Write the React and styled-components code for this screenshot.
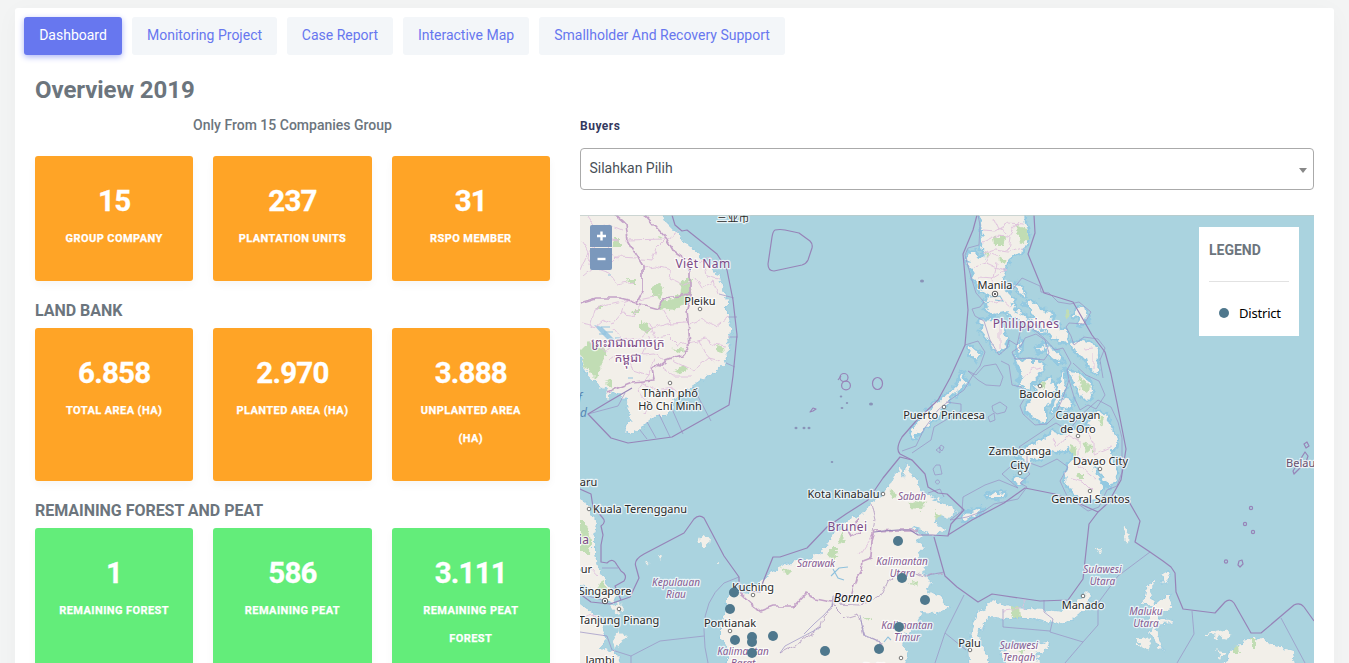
import React from 'react';
import styled, { createGlobalStyle } from 'styled-components';

const GlobalStyle = createGlobalStyle`
  * { box-sizing: border-box; }
  html, body { margin: 0; height: 663px; overflow: hidden; }
  body { background: #f3f4f4; font-family: Roboto, "Liberation Sans", sans-serif; color: #6c757d; }
  h2, h4, h5, p { margin: 0; }
`;

const Page = styled.div`height: 663px; padding: 8px 15px 0; overflow: hidden;`;
const Panel = styled.main`
  height: 780px;
  padding: 9px 20px 0;
  background: #fff;
  border-radius: 3px;
  box-shadow: 0 4px 25px rgba(0, 0, 0, 0.03);
`;
const Tabs = styled.nav`display: flex; gap: 10px; margin-left: -11px;`;
const Tab = styled.button`
  height: 38px;
  width: ${(p) => p.$width}px;
  padding: 0 0 2px;
  border: 0;
  border-radius: 3px;
  font: 400 14px Roboto, sans-serif;
  white-space: nowrap;
  color: ${(p) => (p.$active ? '#fff' : '#6777ef')};
  background: ${(p) => (p.$active ? '#6777ef' : '#f3f6f9')};
  box-shadow: ${(p) => (p.$active ? '0 2px 6px #acb5f6' : 'none')};
`;
const Title = styled.h2`
  margin-top: 19px;
  font-size: 24px;
  line-height: 32px;
  font-weight: 700;
  letter-spacing: -0.08px;
`;
const Columns = styled.div`display: grid; grid-template-columns: 515px 734px; gap: 30px;`;
const Caption = styled.p`
  padding-top: 9px;
  height: 50px;
  text-align: center;
  font-size: 14px;
  line-height: 20px;
  font-weight: 500;
`;
const Section = styled.h4`
  height: 47px;
  padding-top: 19px;
  font-size: 16px;
  line-height: 22px;
  font-weight: 700;
  letter-spacing: -0.03px;
`;
const CardRow = styled.div`
  display: grid;
  grid-template-columns: repeat(3, 1fr);
  gap: 20px;
  height: ${(p) => p.$height}px;
`;
const Card = styled.article`
  padding: 27px 20px 0;
  border-radius: 3px;
  text-align: center;
  color: #fff;
  background: ${(p) => (p.$tone === 'forest' ? '#63ed7a' : '#ffa426')};
  box-shadow: 0 4px 8px rgba(0, 0, 0, 0.04);
`;
const Value = styled.div`
  font-size: 29.5px;
  line-height: 36px;
  font-weight: 700;
  letter-spacing: -0.8px;
  -webkit-text-stroke: 0.3px #fff;
`;
const Label = styled.div`
  margin: 6px auto 0;
  max-width: ${(p) => (p.$wrap ? 108 : 118)}px;
  font-size: 11px;
  line-height: 28px;
  font-weight: 700;
  letter-spacing: 0.42px;
  white-space: ${(p) => (p.$wrap ? 'normal' : 'nowrap')};
  -webkit-text-stroke: 0.25px #fff;
`;
const FieldLabel = styled.label`
  display: block;
  height: 42px;
  padding-top: 12px;
  font-size: 12px;
  line-height: 16px;
  font-weight: 700;
  color: #34395e;
  letter-spacing: 0.5px;
`;
const Select = styled.div`
  display: flex;
  justify-content: space-between;
  height: 42px;
  margin-bottom: 25px;
  padding: 0 6px 0 8.5px;
  border: 1px solid #aaa;
  border-radius: 4px;
  font-size: 14px;
  line-height: 38px;
  color: #495057;
`;
const Caret = styled.span`
  align-self: center;
  margin-top: 3px;
  border: 4px solid transparent;
  border-top: 5px solid #888;
  border-bottom: 0;
`;
const MapFrame = styled.section`position: relative; width: 734px; height: 448px; overflow: hidden; background: #aad3df;`;
const MapSvg = styled.svg`display: block; font-family: "Noto Sans", "Noto Sans Khmer", "Noto Sans CJK SC", sans-serif;`;
const Zoom = styled.div`position: absolute; left: 10px; top: 10px; display: grid; gap: 1px;`;
const ZoomButton = styled.button`
  display: grid;
  place-items: center;
  width: 22px;
  height: 22px;
  padding: 0;
  border: 0;
  color: #fff;
  background: #7b98bc;
  border-radius: ${(p) => (p.$top ? '2px 2px 0 0' : '0 0 2px 2px')};
`;
const Legend = styled.aside`
  position: absolute;
  right: 15px;
  top: 12px;
  width: 100px;
  height: 109px;
  padding: 12px 10px;
  background: #fff;
`;
const LegendTitle = styled.h5`
  height: 43px;
  font-size: 14px;
  line-height: 22px;
  font-weight: 700;
  letter-spacing: 0;
  border-bottom: 1px solid #e2e2e2;
`;
const LegendItem = styled.div`
  display: flex;
  align-items: center;
  gap: 10px;
  height: 61px;
  padding-left: 10px;
  font-family: "Noto Sans", sans-serif;
  font-size: 13px;
  letter-spacing: -0.2px;
  color: #000;
`;
const Dot = styled.span`width: 10px; height: 10px; border-radius: 50%; background: #4f788d;`;

const tabs = [['Dashboard', 98], ['Monitoring Project', 145], ['Case Report', 106], ['Interactive Map', 126], ['Smallholder And Recovery Support', 246]];
const company = [['15', 'GROUP COMPANY'], ['237', 'PLANTATION UNITS'], ['31', 'RSPO MEMBER']];
const land = [['6.858', 'TOTAL AREA (HA)'], ['2.970', 'PLANTED AREA (HA)'], ['3.888', 'UNPLANTED AREA (HA)']];
const forest = [['1', 'REMAINING FOREST'], ['586', 'REMAINING PEAT'], ['3.111', 'REMAINING PEAT FOREST']];

const mainland = [
  // Indochina
  'M570 205H657L663 215 667 223 672 228 680 238 688 246 697 253 704 261 712 266 719 277 721 286 725 293 727 302 727 314 729 323 732 333 728 340 730 346 728 352 724 363 714 372 702 378 698 382 690 387 684 393 674 398 672 410 665 415 656 415 647 422 638 431 626 434 630 419 628 405 623 396 613 390 609 394 605 386 600 389 597 382 590 378 586 369 580 355 570 350Z',
  // Malay peninsula and Sumatra
  'M570 497L580 499 587 503 592 513 597 524 594 539 594 554 599 573 605 581 614 591 617 600 607 602 597 594 587 587 580 585 570 580Z',
  'M570 600L580 603 592 612 601 622 605 637 600 648 616 651 625 673H570Z',
  // Borneo
  'M906 463L910 466 909 473 918 479 920 488 926 495 936 499 944 502 956 511 948 518 938 515 933 522 947 530 933 536 922 530 911 528 923 535 917 541 924 547 918 554 926 563 923 574 930 582 927 591 942 599 949 608 934 613 922 612 917 622 906 633 902 646 908 655 902 673H728L728 648 722 637 722 622 728 606 728 597 738 591 748 594 759 582 772 572 786 563 812 558 825 548 836 531 849 521 863 514 871 503 884 494 889 486 894 476 900 467 904 480Z',
  // Sulawesi
  'M970 673L968 647 972 627 978 612 987 606 992 600 1008 607 1026 609 1047 610 1062 612 1070 605 1080 599 1088 592 1092 595 1085 608 1070 621 1052 624 1032 618 1010 618 988 617 980 630 979 645 989 656 986 673ZM1000 653L1017 647 1033 645 1049 643 1047 650 1036 653 1040 673H1013Z',
  // Halmahera and Papua
  'M1155 578L1151 591 1153 603 1148 614 1152 624 1150 633 1157 644 1163 650 1158 638 1155 625 1173 623 1159 618 1159 612 1170 608 1171 594 1161 600 1152 604 1143 604 1145 592ZM1161 575L1168 570 1170 579 1163 584ZM1220 673L1230 651 1245 642 1258 638 1270 644 1293 651 1296 673Z',
];
const islands = [
  'M980 205L980 215 983 240 981 249 987 256 980 258 975 252 968 252 967 259 972 270 975 280 980 289 990 296 985 303 991 302 986 309 993 315 1006 312 1016 317 1028 324 1040 332 1047 334 1033 324 1020 312 1011 309 1015 301 1008 294 1007 289 1002 279 1004 270 1009 263 1011 256 1020 251 1027 245 1028 235 1025 223 1023 205Z',
  'M1025 305L1030 301 1039 304 1041 311 1051 312 1053 317 1047 320 1058 325 1067 333 1066 343 1057 339 1047 331 1035 323 1028 318 1037 319 1031 309Z',
  'M978 320L994 319 1001 325 1007 338 1003 349 997 353 990 342 981 331 984 326Z',
  'M970 348L980 352 976 360 969 355ZM962 372L967 383 957 392 947 401 940 414 925 427 913 438 910 433 922 417 933 407 944 397 957 386Z',
  'M1015 357L1026 361 1038 361 1044 367 1036 379 1028 388 1018 385 1022 373ZM1049 379L1055 388 1051 402 1045 410 1045 422 1037 420 1025 411 1030 402 1036 395 1035 387ZM1064 371L1066 386 1058 402 1052 413 1056 399 1058 387ZM1045 345L1054 350 1063 361 1058 362 1050 355Z',
  'M1071 343L1083 341 1094 345 1098 352 1097 373 1090 368 1087 359 1078 354ZM1068 371L1078 372 1090 383 1092 397 1088 402 1079 393 1074 382ZM1064 397L1073 400 1072 408 1063 410 1058 405Z',
  'M1018 454L1028 447 1044 439 1053 432 1065 437 1070 429 1084 431 1094 414 1100 411 1107 417 1110 426 1117 439 1116 447 1109 451 1115 464 1116 478 1109 487 1102 474 1093 466 1096 476 1104 486 1099 497 1088 502 1074 495 1065 480 1068 466 1075 458 1069 448 1058 452 1047 450 1041 458 1025 461ZM1014 478L1024 480 1023 484 1015 482Z',
  'M1079 307L1086 312 1087 323 1079 324 1080 317 1073 316ZM1014 283L1020 284 1025 296 1018 292ZM1018 347L1022 339 1021 350 1018 353ZM1037 347L1044 344 1045 349 1039 353Z',
  'M989 493L997 494 1005 493 1001 497 988 497ZM971 512L981 508 979 514 966 519 963 517Z',
];
const islets = 'M1125 527L1129 529 1128 543 1124 538ZM1096 545L1102 552 1100 554ZM1206 633L1220 630 1230 633 1228 639 1207 634ZM702 534L709 539 708 545 701 545 699 540ZM646 562L650 563 648 567ZM657 554L662 556 659 560ZM718 562L720 566 717 566ZM609 605L621 603 622 612 615 613ZM619 630L628 639 622 641 616 650 614 641ZM1136 638L1152 639 1149 649 1136 643ZM1216 650L1225 652 1222 659ZM606 391L610 389 610 400 607 397Z';
const woods = [
  'M580 350L588 342 603 346 606 356 601 367 596 378 587 369 580 353ZM653 286L660 282 663 290 661 299 653 296ZM682 281L691 279 690 301 676 308 658 310 659 303 680 296ZM641 321L650 326 650 333 641 330ZM675 370L683 365 688 369 683 374ZM716 345L724 348 725 353 716 351ZM606 378L612 380 612 389 608 385ZM614 238H620V246H615ZM627 279H636V285H628ZM634 309H639V313H632ZM596 306H601V310H596ZM672 350L683 348 681 353ZM657 236L664 238 659 240Z',
  'M1016 224L1026 228 1029 239 1021 246 1020 237ZM993 237L1006 237 1003 245 994 245ZM999 255L1007 260 1004 265 1000 262ZM985 252L990 253 988 257ZM1078 371L1083 380 1089 387 1087 393 1081 389ZM1066 309H1069V317H1067Z',
  'M907 504L916 500 927 502 921 510 910 509ZM891 490L897 494 893 498 889 496ZM933 512L943 515 936 519ZM829 549L838 549 836 558 826 557ZM781 567L792 572 787 577ZM842 531L845 542 839 543ZM910 581L918 582 916 587ZM864 617L870 617 867 622Z',
  'M1010 606L1019 607 1020 618 1012 618ZM1232 648L1239 647 1240 653H1232ZM1252 639H1256V647H1252ZM580 519L588 527 591 541 590 553 580 553ZM601 582L607 586 606 594 598 589ZM1085 443L1093 444 1092 452 1084 451ZM1071 445L1078 448 1076 457 1070 453ZM1098 415L1103 418 1105 426 1100 423ZM1078 474H1084V479H1079ZM1019 651L1026 649 1024 654ZM1041 383L1047 382 1044 390Z',
];
const maritime = [
  'M672 215L675 225 682 231 687 230 717 254 727 270 733 300 737 335 733 376 729 405 672 437 628 443 611 438 588 414 608 402 632 388',
  'M775 230Q780 229 785 230L799 233 810 241Q813 244 812 248L808 260Q806 264 802 265L774 271Q768 271 768 264L772 237Q773 231 775 230',
  'M977 215L973 230 963 254 968 310 965 345 950 378 938 400 916 421 902 437Q895 449 900 454L912 460 925 474 928 487 938 493 947 494 964 510 951 524 948 536 932 535 918 535 910 530 898 530 883 531 874 532',
  'M1034 215L1035 233 1028 254 1044 293 1073 302 1092 335 1105 352 1111 374 1117 403 1126 449 1121 480 1108 503 1098 512 1078 503 1055 494 1025 488 1004 503 972 520 948 535',
  'M912 460L900 457 883 478 868 500 846 514 827 527 807 548 780 557 773 557 763 582 760 592 739 590 739 577 724 556 704 518Q699 514 694 519L684 533 644 554Q633 560 636 567L639 578 630 597 610 604 591 602 580 594',
  'M580 489L591 494 593 507 602 517Q607 522 601 526L603 535 601 545 601 562 607 563Q613 557 617 565L621 571Q628 575 624 581L615 586 621 600',
  'M934 537L945 576 957 587 978 602 992 594 1040 601 1068 600 1083 579 1089 524 1098 512M1108 502L1128 500 1140 521 1135 542 1150 552 1163 561 1171 567 1175 573 1176 592 1183 609 1215 613 1225 602Q1230 598 1234 603L1251 633 1261 633 1294 605Q1300 602 1304 607L1314 621',
];
const thin = [
  'M739 577L724 583 Q704 600 704 630Q704 648 708 663M704 636L660 641 631 656 612 650 607 636 580 632M631 656V663M602 568H618M580 594L607 601M964 595L945 633 935 663M945 633L966 650M1003 609L1003 627 1050 631M1044 600L1044 612 1053 619 1050 632 1083 642 1098 625 1098 603 1118 576 1150 552M1083 642L1065 663M1192 611L1194 634 1177 663M1281 618L1305 663M719 294L734 298M728 317H737M728 337H738M726 363L735 367M693 387L711 421M672 409L683 434M659 414L670 437M647 422L656 438M640 430L647 439M625 393L618 406 588 414M928 575L944 572',
  'M804 634L815 623 824 615 832 606 833 596M860 615L864 635 880 642 878 651M821 627L785 646 780 653',
  'M978 215L980 225 979 245 968 248 965 255 971 277 976 293 984 302 980 307 972 309 975 316 984 321 990 340 999 355 1007 348 1009 340 1017 345 1020 332 1028 325 1044 338 1055 350 1063 348 1071 363 1067 370 1069 380 1062 400 1054 417 1047 424 1035 425 1023 414 1020 406 1027 394 1021 387 1012 385 1009 365 1001 361M1013 289L1022 278 1040 286 1041 292 1049 293 1058 302 1070 304 1079 302 1091 312 1084 324 1069 323 1066 327 1071 336 1074 345 1084 337 1098 339 1105 348 1100 360 1103 378M1021 346L1012 352 1015 359 1029 358 1044 360 1049 353 1045 340 1036 334 1025 338Z',
  'M965 345L978 341 985 352 980 366 973 375 964 390 950 400 938 410 924 429 916 446 902 451 M968 371L976 375 984 366 996 364 1003 377 1000 386 986 385 978 380Z M992 406L1000 402 1007 407 1005 412 997 414 993 411Z M988 417L994 413 995 420 990 422ZM963 497L985 485 999 480 1018 488 1002 474 1010 467 1022 465 1030 474 1020 483 1027 487 1018 499 994 504 984 511 967 517 950 520 962 511Z M946 402L961 404 961 411 934 427 931 440 912 453',
  'M1027 454L1019 447 1043 431 1056 423 1069 431 1079 417 1090 407 1098 400 1111 407 1118 422 1122 438 1122 472 1117 486 1107 490 1099 507 1088 511 1067 496 1060 481 1068 467 1057 459 1041 467 1027 462ZM936 465L940 465 942 474 935 475 933 469ZM936 450L940 447 940 453ZM941 445L944 447 942 451 939 448ZM938 480A2 2 0 1 1 937 480ZM928 493L940 489 944 497M1073 363L1086 375 1099 381 1105 395 1096 409 1088 405 1080 410 1074 397 1069 380',
];
const internal = [
  'M580 303L596 298 620 298 637 302 643 291 643 266 627 240 625 224 615 215M645 215L666 238 674 252 683 258 690 271 690 298 687 309 690 345 682 355 665 360 653 370 655 380 633 382 608 392M637 303L659 309 663 298 690 295',
  'M739 593L751 604 760 611 773 606 794 606 805 594 816 599 831 602 838 595 851 596 856 579 862 570 863 561 871 558 872 541 875 531 898 530 917 530M847 529L851 536 859 532 858 518',
];
const provinces = 'M588 216L596 228 610 225 622 230M590 249L604 238 619 240M604 270L617 257 637 258M625 240L668 239 681 230M666 239L657 248 653 260 641 259M681 258L703 262 711 257M643 268L656 266 671 270 670 279 682 285 689 281M695 277L702 288 714 282 718 293M580 323L596 326 603 320 612 325 621 314 633 315 643 304M613 329L620 340 640 338 649 330 671 323 687 322M621 314L625 303 653 297M590 327L595 309 609 305 634 299M609 360L617 354 629 358 642 355 650 337M629 358L633 371 648 376 655 360M591 342L606 351 620 340M687 325L702 319 716 326 728 316M689 343L706 339 715 344 728 346M673 360L694 370 709 358 721 361M661 367L674 376 692 376M641 382L658 391 673 388 680 399M637 390L647 401 644 414M580 271L588 252 581 241M583 277L594 268 609 273 618 285 634 282M590 250L588 266M604 238L610 252 619 259M649 323L655 338 669 336 678 345 689 343M671 323L663 310M642 355L655 354 665 360M648 376L637 390M699 340L704 352 715 364M702 260L706 276 718 279M983 230L996 231 1008 224 1023 225M983 242L995 236 1008 237 1018 222M982 254L995 250 1010 252 1025 247M995 218L1000 229 1010 237 1008 251M973 267L985 263 1006 272M985 263L990 253 999 258M978 277L994 278 1004 272M989 303L1002 301 1010 308M997 263L994 278 990 290M1000 322V349M1023 377L1032 370 1042 368M1052 438L1057 447 1068 435 1079 441 1079 466 1095 479M1086 431L1094 442 1094 454 1111 447M1071 478L1083 481 1093 491M1080 458L1090 461 1098 457M1083 349L1095 348M1093 353V369M860 554L875 532M1025 598L1026 611M1004 610L1026 607M580 567L592 569 598 576M580 618L594 614 603 622';
const regions = 'M833 596L834 606 824 615 821 627 799 643 780 653M833 606L845 618 858 614 864 635 880 642 878 651M833 603L860 604 870 602 883 593 888 581 898 573 914 572 926 577 944 573M871 503L875 520 873 532';

const places = [
  [733, 221.5, '三业市', 'city'], [703, 268, 'Việt Nam', 'country'], [700, 305, 'Pleiku', 'city'],
  [628, 347, 'ព្រះរាជាណាចក្រ', 'khmer'], [628, 362, 'កម្ពុជា', 'khmer'],
  [670, 397, 'Thành phố', 'city'], [670, 410, 'Hồ Chí Minh', 'city'], [995, 289, 'Manila', 'city'],
  [1026, 328, 'Philippines', 'country'], [1040, 398, 'Bacolod', 'city'], [944, 419, 'Puerto Princesa', 'city'],
  [1078, 419, 'Cagayan', 'city'], [1078, 432.5, 'de Oro', 'city'], [1020, 455, 'Zamboanga', 'city'], [1020, 468.5, 'City', 'city'],
  [1100.5, 465, 'Davao City', 'city'], [1090.5, 503, 'General Santos', 'city'], [843.5, 498, 'Kota Kinabalu', 'city'],
  [912, 500, 'Sabah', 'region'], [847.5, 530.5, 'Brunei', 'country'], [816, 567, 'Sarawak', 'region'],
  [902, 565, 'Kalimantan', 'region'], [902.5, 577, 'Utara', 'region'], [853, 602, 'Borneo', 'island'],
  [907, 629, 'Kalimantan', 'region'], [907, 641, 'Timur', 'region'], [743, 655, 'Kalimantan', 'region'], [743, 667, 'Barat', 'region'],
  [588.5, 486, 'aru', 'city'], [640, 513, 'Kuala Terengganu', 'city'], [584, 544, 'ia', 'country'], [583, 573, 'our', 'city'],
  [605, 595, 'Singapore', 'city'], [619, 624, 'Tanjung Pinang', 'city'], [600, 664, 'Jambi', 'city'],
  [676, 586, 'Kepulauan', 'region'], [676, 598, 'Riau', 'region'], [753, 591, 'Kuching', 'city'], [730, 627, 'Pontianak', 'city'],
  [969.5, 647, 'Palu', 'city'], [1083, 609, 'Manado', 'city'], [1102.5, 573, 'Sulawesi', 'region'], [1102.5, 585, 'Utara', 'region'],
  [1019, 649, 'Sulawesi', 'region'], [1019, 661, 'Tengah', 'region'], [1146, 615, 'Maluku', 'region'], [1146, 627, 'Utara', 'region'],
  [1286, 467, 'Belau', 'palau'], [580, 402, 'f', 'sea'], [583.5, 417, 'd', 'sea'], [892, 671, 'Balikpapan', 'city'],
];
const cities = [[700, 309], [670, 383], [1040, 386], [944, 407], [1078, 436], [1020, 473], [1100, 469], [1090, 491], [883, 494], [589, 509], [619, 609], [753, 595], [730, 631], [970, 650], [1083, 596], [901, 658]];
const districts = [[898, 541], [902, 578], [925, 600], [899, 627], [879, 649], [825, 651], [734, 592.5], [730, 609], [735, 640], [752, 637], [752, 642], [752, 653], [773, 636]];
const reefs = [[922, 281, 2], [841, 396.5, 1.3], [842, 408, 1.4], [847, 403, 1.2], [871, 404, 2], [796, 428, 1.5], [804, 428, 1.5], [809, 428, 1.5], [832, 462, 1.3]];

const textSizes = { country: 12, khmer: 12.4, region: 10, island: 12, palau: 11, sea: 12, city: 11 };
const textFills = { country: '#7c4a86', khmer: '#7c4a86', region: '#855b91', palau: '#68506f', sea: '#5688b5', island: '#171717', city: '#292929' };
const PlaceText = styled.text`
  text-anchor: ${(p) => (p.$kind === 'palau' ? 'start' : 'middle')};
  font-size: ${(p) => textSizes[p.$kind]}px;
  font-style: ${(p) => (['region', 'island', 'sea'].includes(p.$kind) ? 'italic' : 'normal')};
  letter-spacing: ${(p) => (p.$kind === 'country' ? 0.45 : 0.02)}px;
  fill: ${(p) => textFills[p.$kind]};
  paint-order: stroke;
  stroke: rgba(255, 255, 255, 0.72);
  stroke-width: ${(p) => (p.$kind === 'sea' ? 0 : 2.5)}px;
  stroke-linejoin: round;
`;

function SeaMap() {
  return (
    <MapSvg width="734" height="448" viewBox="580 215 734 448" aria-label="Map">
      <defs>
        <filter id="coast" filterUnits="userSpaceOnUse" x="570" y="205" width="754" height="468" colorInterpolationFilters="sRGB">
          <feTurbulence type="fractalNoise" baseFrequency="0.16" numOctaves="3" seed="4" result="noise" />
          <feDisplacementMap in="SourceGraphic" in2="noise" scale="9" xChannelSelector="R" yChannelSelector="G" />
        </filter>
        <filter id="border" filterUnits="userSpaceOnUse" x="570" y="205" width="754" height="468" colorInterpolationFilters="sRGB">
          <feTurbulence type="fractalNoise" baseFrequency="0.1" numOctaves="2" seed="8" result="noise" />
          <feDisplacementMap in="SourceGraphic" in2="noise" scale="7" xChannelSelector="R" yChannelSelector="G" />
        </filter>
      </defs>
      <g filter="url(#coast)">
        <g fill="#8cc6e2" stroke="#8cc6e2" strokeWidth="5" strokeLinejoin="round" opacity=".75">{islands.map((d) => <path key={d} d={d} />)}</g>
        <g fill="#f2efe9">{mainland.map((d) => <path key={d} d={d} stroke="#9bcce2" strokeWidth="1.6" paintOrder="stroke" />)}</g>
        <g fill="#f2efe9">{islands.map((d) => <path key={d} d={d} />)}<path d={islets} /></g>
        <g fill="#c1ddb4">{woods.map((d) => <path key={d} d={d} />)}</g>
      </g>
      <path d="M594 325L602 327 611 336 616 341 607 339 601 333Z" fill="#a2cbe3" />
      <path d="M601 327H610M604 332H613M599 334H606M615 338H621M628 378H633M608 275H611M990 297L1000 296 1003 301 995 300M831 576L839 568 848 567M833 569L838 578 844 580M884 642L888 637 891 640" fill="none" stroke="#8fc1dd" strokeWidth="1.1" />
      <g fill="none" stroke="#dfbfdc" strokeWidth=".9" filter="url(#border)"><path d={provinces} /></g>
      <g fill="none" stroke="#b9a3c6" strokeWidth=".9" filter="url(#border)"><path d={regions} /></g>
      <g fill="none" stroke="#9a90c4" strokeWidth=".7" strokeLinejoin="round">{thin.map((d) => <path key={d} d={d} />)}</g>
      <g fill="none" stroke="#c4a2c8" strokeWidth="1.7" strokeLinejoin="round" filter="url(#border)">{internal.map((d) => <path key={d} d={d} />)}</g>
      <g fill="none" stroke="#9784b8" strokeWidth="1.2" strokeLinejoin="round">
        {maritime.map((d) => <path key={d} d={d} />)}
        <circle cx="844" cy="377.5" r="4" /><circle cx="846" cy="385.5" r="4.4" /><ellipse cx="877.5" cy="383.5" rx="5" ry="6" />
        <path d="M838 380L841 376M810 412L813 408 816 409 813 411ZM1239 561L1242 560 1243 564 1240 567 1238 565ZM1304 444L1307 442 1309 446 1306 448ZM1293 471L1305 452 1308 456 1306 462 1294 474Z" />
        {[[1251, 508], [1245, 524], [1253, 532], [1226, 561.5]].map(([x, y]) => <circle key={x} cx={x} cy={y} r="1.6" />)}
      </g>
      <g fill="#8993b8">{reefs.map(([x, y, r]) => <ellipse key={`${x}-${y}`} cx={x} cy={y} rx={r} ry={r * 0.8} />)}</g>
      <g fill="#fff" stroke="#555" strokeWidth=".8">{cities.map(([x, y]) => <circle key={`${x}-${y}`} cx={x} cy={y} r="1.8" />)}</g>
      <g fill="#fff" stroke="#444" strokeWidth=".9"><circle cx="995" cy="294" r="2.8" /><circle cx="605" cy="601" r="2.8" /></g>
      <g fill="#444"><circle cx="995" cy="294" r="1.1" /><circle cx="605" cy="601" r="1.1" /></g>
      {places.map(([x, y, name, kind], i) => <PlaceText key={i} x={x} y={y} $kind={kind}>{name}</PlaceText>)}
      <g fill="#4f788d">{districts.map(([x, y]) => <circle key={`${x}-${y}`} cx={x} cy={y} r="5" />)}</g>
      <path d="M580 215.5H1314" stroke="#bdcbc9" opacity=".7" />
    </MapSvg>
  );
}

const Cards = ({ items, tone, height }) => (
  <CardRow $height={height}>
    {items.map(([value, label]) => (
      <Card key={label} $tone={tone}><Value>{value}</Value><Label $wrap={label.length > 18}>{label}</Label></Card>
    ))}
  </CardRow>
);

export default function App() {
  return (
    <Page>
      <GlobalStyle />
      <Panel>
        <Tabs>{tabs.map(([name, width], i) => <Tab key={name} $width={width} $active={i === 0}>{name}</Tab>)}</Tabs>
        <Title>Overview 2019</Title>
        <Columns>
          <div>
            <Caption>Only From 15 Companies Group</Caption>
            <Cards items={company} height={125} />
            <Section>LAND BANK</Section>
            <Cards items={land} height={153} />
            <Section>REMAINING FOREST AND PEAT</Section>
            <Cards items={forest} tone="forest" height={153} />
          </div>
          <div>
            <FieldLabel>Buyers</FieldLabel>
            <Select>Silahkan Pilih<Caret /></Select>
            <MapFrame>
              <SeaMap />
              <Zoom>
                <ZoomButton $top aria-label="Zoom in"><svg width="10" height="10" stroke="currentColor" strokeWidth="2.4"><path d="M1 5H10M5.5 .5V9.5" /></svg></ZoomButton>
                <ZoomButton aria-label="Zoom out"><svg width="10" height="10" stroke="currentColor" strokeWidth="2.4"><path d="M1.5 5H9.5" /></svg></ZoomButton>
              </Zoom>
              <Legend><LegendTitle>LEGEND</LegendTitle><LegendItem><Dot />District</LegendItem></Legend>
            </MapFrame>
          </div>
        </Columns>
      </Panel>
    </Page>
  );
}
